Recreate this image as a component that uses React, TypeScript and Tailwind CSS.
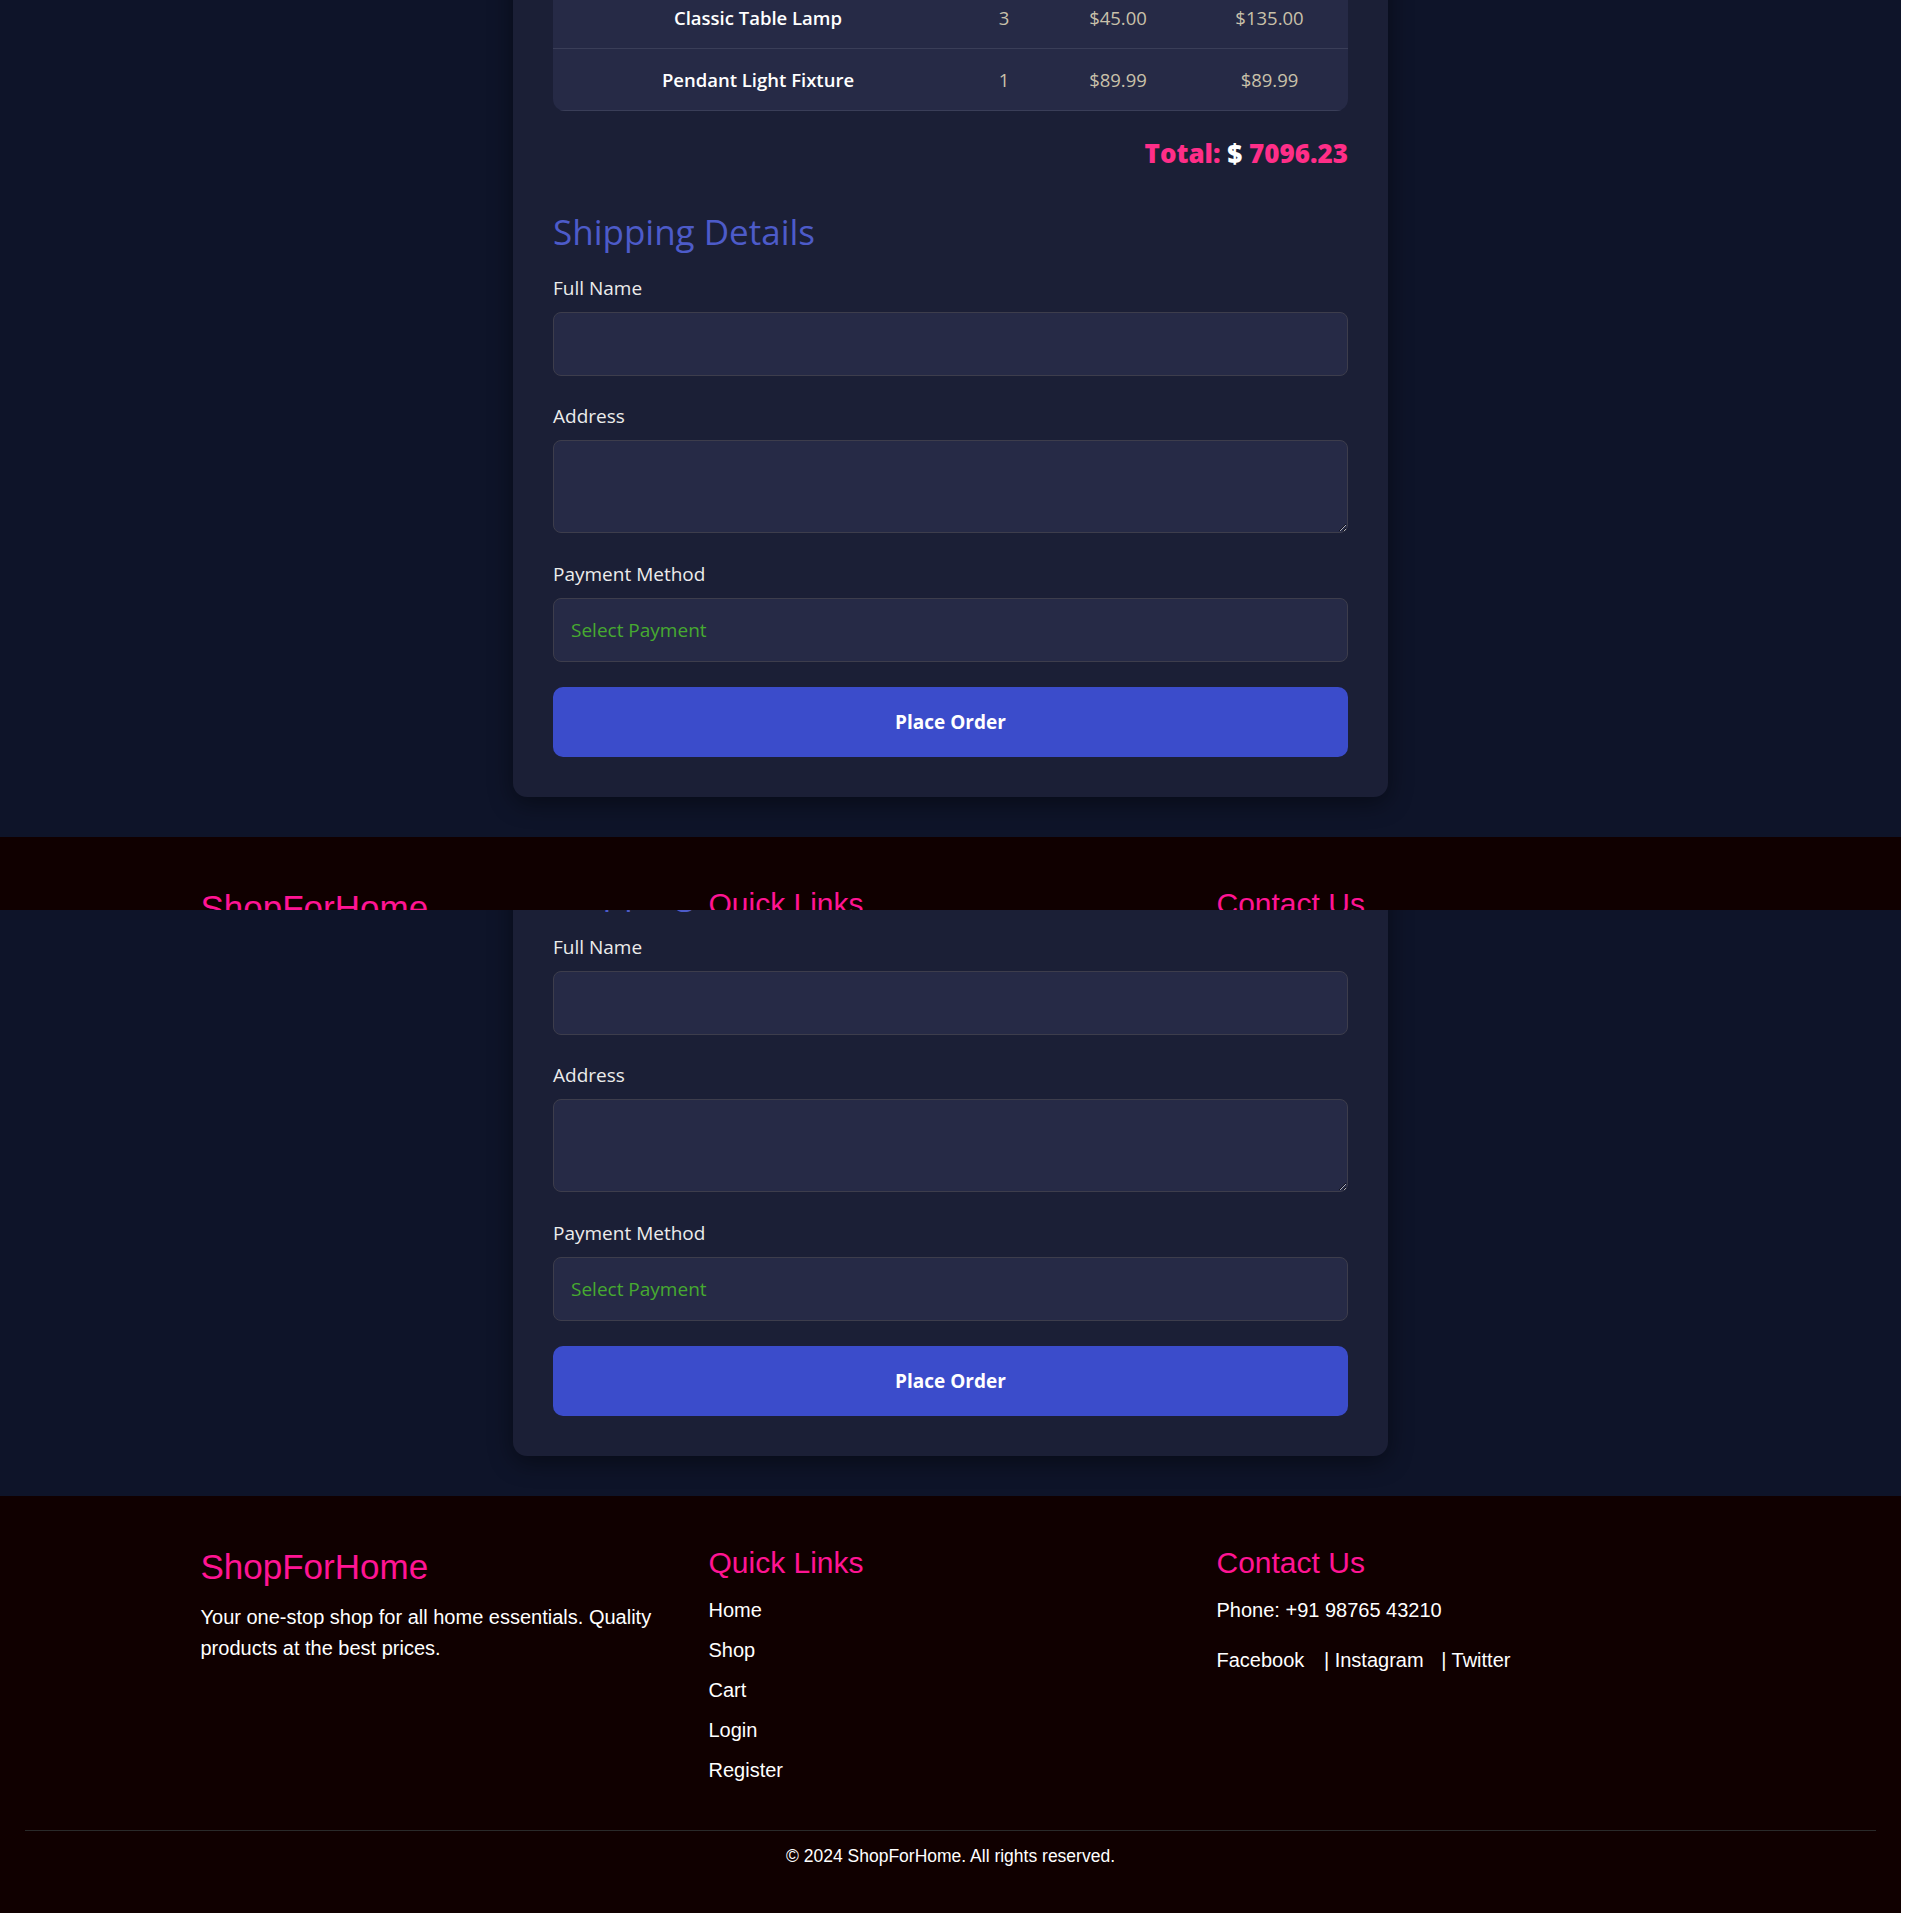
import React from "react";

const items = [
  { name: "Classic Table Lamp", qty: 3, price: "$45.00", total: "$135.00" },
  { name: "Pendant Light Fixture", qty: 1, price: "$89.99", total: "$89.99" },
];

const links = ["Home", "Shop", "Cart", "Login", "Register"];

function Field({ label, children, gap }: { label: string; children: React.ReactNode; gap: string }) {
  return (
    <div className={gap}>
      <label className="block text-[19px] leading-[28px] text-[#ececec] mb-[10px]">{label}</label>
      {children}
    </div>
  );
}

function Checkout() {
  return (
    <section className="pt-[40px] pb-[40px]">
      <div
        className="w-[875px] mx-auto bg-[#1b1f36] rounded-[14px] px-[40px] pt-[40px] pb-[40px] shadow-[0_6px_24px_rgba(0,0,0,0.45)]"
        style={{ fontFamily: "'Open Sans', 'Noto Sans', sans-serif" }}
      >
        <div className="bg-[#262a46] rounded-[12px] overflow-hidden">
          {items.map((it) => (
            <div
              key={it.name}
              className="grid grid-cols-[410px_82px_146px_157px] h-[62px] items-center border-b border-[#3a3e58] text-[18.5px] text-center"
            >
              <span className="font-semibold text-white">{it.name}</span>
              <span className="text-[#c9c1aa]">{it.qty}</span>
              <span className="text-[#c9c1aa]">{it.price}</span>
              <span className="text-[#c9c1aa]">{it.total}</span>
            </div>
          ))}
        </div>

        <div className="mt-[26px] text-right text-[26px] leading-[32px] font-extrabold text-[#ff2e88]">
          Total: <span className="text-white">$</span> 7096.23
        </div>

        <h2 className="mt-[42px] mb-[21px] text-[35px] leading-[42px] text-[#4d5bc9] font-medium">Shipping Details</h2>

        <Field label="Full Name" gap="mb-[26px]">
          <input className="block w-full h-[64px] bg-[#262a46] border border-[#3d3d4c] rounded-[8px] px-[17px] text-white outline-none" />
        </Field>
        <Field label="Address" gap="mb-[27px]">
          <textarea className="block w-full h-[93px] bg-[#262a46] border border-[#3d3d4c] rounded-[8px] px-[17px] py-[10px] text-white outline-none" />
        </Field>
        <Field label="Payment Method" gap="mb-[25px]">
          <select className="block w-full h-[64px] bg-[#262a46] border border-[#3d3d4c] rounded-[8px] pl-[17px] text-[19px] text-[#46aa30] appearance-none outline-none">
            <option>Select Payment</option>
          </select>
        </Field>

        <button className="block w-full h-[70px] bg-[#3b4ccb] rounded-[10px] text-white text-[19px] font-bold">
          Place Order
        </button>
      </div>
    </section>
  );
}

function Footer() {
  return (
    <footer
      className="bg-[#100000] text-white pt-[49px] pb-[60px]"
      style={{ fontFamily: "'Liberation Sans', Arial, sans-serif" }}
    >
      <div className="max-w-[1500px] mx-auto grid grid-cols-3 gap-6">
        <div className="pt-[2px]">
          <h2 className="text-[35px] leading-[40px] text-[#ff1493]">ShopForHome</h2>
          <p className="mt-[15px] text-[20px] leading-[31px]">
            Your one-stop shop for all home essentials. Quality products at the best prices.
          </p>
        </div>
        <div>
          <h3 className="text-[30px] leading-[35px] text-[#ff1493]">Quick Links</h3>
          <ul className="mt-[15px]">
            {links.map((l) => (
              <li key={l} className="text-[20px] leading-[30px] mb-[10px]">
                <a href="#">{l}</a>
              </li>
            ))}
          </ul>
        </div>
        <div>
          <h3 className="text-[30px] leading-[35px] text-[#ff1493]">Contact Us</h3>
          <p className="mt-[15px] text-[20px] leading-[30px]">Phone: +91 98765 43210</p>
          <p className="mt-[20px] text-[20px] leading-[30px]">
            <a href="#" className="mr-[14px]">Facebook</a> | <a href="#" className="mr-[12px]">Instagram</a> |{" "}
            <a href="#">Twitter</a>
          </p>
        </div>
      </div>
      <div className="mx-[25px] mt-[35px] border-t border-[#2a2a2a]" />
      <p className="mt-[12px] text-center text-[17.5px] leading-[26px]">© 2024 ShopForHome. All rights reserved.</p>
    </footer>
  );
}

function Page() {
  return (
    <div className="bg-[#0e1429]">
      <Checkout />
      <Footer />
    </div>
  );
}

export default function App() {
  return (
    <div className="w-[1901px] bg-[#0e1429]">
      <div className="h-[910px] overflow-hidden">
        <div className="-mt-[93px]">
          <Page />
        </div>
      </div>
      <div className="h-[1003px] overflow-hidden">
        <div className="-mt-[344px]">
          <Page />
        </div>
      </div>
    </div>
  );
}
